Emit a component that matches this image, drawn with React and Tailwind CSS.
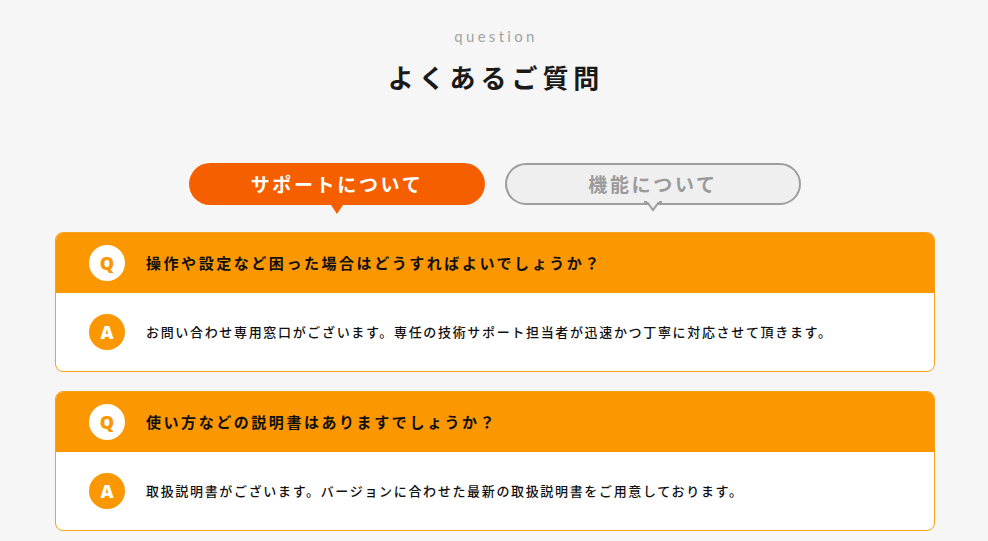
import React, { useState } from "react";

const faqs = {
  support: [
    {
      q: "操作や設定など困った場合はどうすればよいでしょうか？",
      a: "お問い合わせ専用窓口がございます。専任の技術サポート担当者が迅速かつ丁寧に対応させて頂きます。",
    },
    {
      q: "使い方などの説明書はありますでしょうか？",
      a: "取扱説明書がございます。バージョンに合わせた最新の取扱説明書をご用意しております。",
    },
  ],
  feature: [],
};

const jp = { fontFamily: '"Noto Sans CJK JP", "Noto Sans", sans-serif' };

function Tab({ label, active, onClick }) {
  return (
    <button
      onClick={onClick}
      className={`relative w-[296px] h-[42px] rounded-full text-[19px] font-bold tracking-[0.14em] ${
        active
          ? "bg-[#f65f00] text-white"
          : "bg-[#efefef] text-[#9a9a9a] border-2 border-[#9e9e9e]"
      }`}
      style={jp}
    >
      {label}
      {active ? (
        <span className="absolute left-1/2 -translate-x-1/2 top-full w-0 h-0 border-x-[6px] border-x-transparent border-t-[9px] border-t-[#f65f00]" />
      ) : (
        <svg
          className="absolute left-1/2 -translate-x-1/2 top-full -mt-[2px]"
          width="18"
          height="12"
          viewBox="0 0 18 12"
        >
          <path d="M0 1 L3 1 L9 9 L15 1 L18 1" fill="#efefef" stroke="#9e9e9e" strokeWidth="2" />
          <rect x="3" y="-1" width="12" height="2" fill="#efefef" />
        </svg>
      )}
    </button>
  );
}

function Badge({ letter, inverted }) {
  return (
    <div
      className={`w-[36px] h-[36px] rounded-full flex items-center justify-center shrink-0 text-[18px] font-black ${
        inverted ? "bg-white text-[#fb9700]" : "bg-[#fb9700] text-white"
      }`}
      style={{ fontFamily: '"Open Sans", sans-serif' }}
    >
      {letter}
    </div>
  );
}

export default function App() {
  const [tab, setTab] = useState("support");

  return (
    <div className="min-h-[541px] bg-[#f6f6f6] pt-[26px]" style={jp}>
      <p
        className="text-center text-[15px] leading-[20px] tracking-[0.22em] text-[#a3a3a3] pl-[4px]"
        style={{ fontFamily: '"Lato", sans-serif' }}
      >
        question
      </p>
      <h2 className="mt-[14px] text-center text-[26px] leading-[34px] font-bold tracking-[0.19em] text-[#1a1a1a] pl-[4px]">
        よくあるご質問
      </h2>

      <div className="mt-[69px] flex justify-center gap-[20px] pl-[2px]">
        <Tab label="サポートについて" active={tab === "support"} onClick={() => setTab("support")} />
        <Tab label="機能について" active={tab === "feature"} onClick={() => setTab("feature")} />
      </div>

      <div className="ml-[55px] mr-[53px] mt-[27px] flex flex-col gap-[19px]">
        {faqs.support.map((item) => (
          <div
            key={item.q}
            className="rounded-[8px] border border-[#f7a21c] overflow-hidden bg-white"
          >
            <div className="h-[60px] bg-[#fb9700] flex items-center pl-[33px] gap-[21px]">
              <Badge letter="Q" inverted />
              <p className="text-[15px] font-bold tracking-[0.17em] text-[#111]">{item.q}</p>
            </div>
            <div className="h-[78px] flex items-center pl-[33px] gap-[21px]">
              <Badge letter="A" />
              <p className="text-[13px] font-medium tracking-[0.128em] text-[#111]">{item.a}</p>
            </div>
          </div>
        ))}
      </div>
    </div>
  );
}
